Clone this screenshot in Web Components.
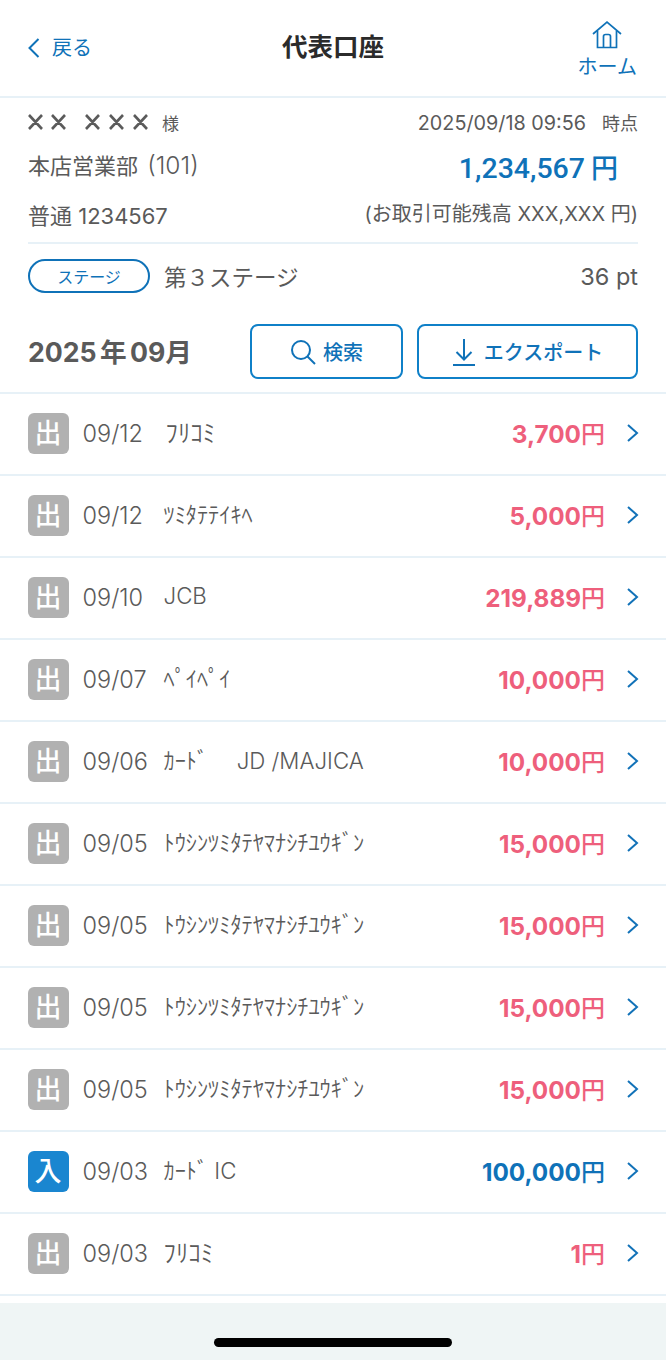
<!DOCTYPE html>
<html lang="ja"><head><meta charset="utf-8">
<style>
html,body{margin:0;padding:0;background:#fff}
body{width:666px;height:1360px;overflow:hidden;font-family:Inter,"Noto Sans CJK JP",sans-serif;color:#5a5a5a;display:flex;flex-direction:column}
</style></head><body>
<app-header></app-header>
<account-info></account-info>
<month-bar></month-bar>
<tx-list>
<tx-row date="09/12" name="ﾌﾘｺﾐ" amount="3,700" tall="first"></tx-row>
<tx-row date="09/12" name="ﾂﾐﾀﾃﾃｲｷﾍ" amount="5,000"></tx-row>
<tx-row date="09/10" name="JCB" amount="219,889"></tx-row>
<tx-row date="09/07" name="ﾍﾟｲﾍﾟｲ" amount="10,000"></tx-row>
<tx-row date="09/06" name="ｶｰﾄﾞ　 JD /MAJICA" amount="10,000"></tx-row>
<tx-row date="09/05" name="ﾄｳｼﾝﾂﾐﾀﾃﾔﾏﾅｼﾁﾕｳｷﾞﾝ" amount="15,000"></tx-row>
<tx-row date="09/05" name="ﾄｳｼﾝﾂﾐﾀﾃﾔﾏﾅｼﾁﾕｳｷﾞﾝ" amount="15,000"></tx-row>
<tx-row date="09/05" name="ﾄｳｼﾝﾂﾐﾀﾃﾔﾏﾅｼﾁﾕｳｷﾞﾝ" amount="15,000"></tx-row>
<tx-row date="09/05" name="ﾄｳｼﾝﾂﾐﾀﾃﾔﾏﾅｼﾁﾕｳｷﾞﾝ" amount="15,000"></tx-row>
<tx-row date="09/03" name="ｶｰﾄﾞ IC" amount="100,000" kind="in"></tx-row>
<tx-row date="09/03" name="ﾌﾘｺﾐ" amount="1" tall="last"></tx-row>
</tx-list>
<home-bar></home-bar>
<script>
const def=(name,html,init)=>customElements.define(name,class extends HTMLElement{
  constructor(){super();this.attachShadow({mode:'open'}).innerHTML=html;}
  connectedCallback(){if(init)init(this,this.shadowRoot);}
});
def('app-header',`<style>
:host{display:flex;align-items:flex-start;height:96px;border-bottom:2px solid #e7f1f7;position:relative;flex:none;color:#0f72b8}
.back{display:flex;align-items:center;gap:11px;margin:36px 0 0 27px;font-size:20px;line-height:24px}
h1{position:absolute;left:0;right:0;top:30px;margin:0;text-align:center;font-size:25.500px;line-height:34px;font-weight:700;color:#2b2b2b}
.home{margin:21px 29px 0 auto;display:flex;flex-direction:column;align-items:center;font-size:20px;line-height:24px}
svg{display:block}
.home span{margin-top:6px}
</style>
<div class="back"><svg width="14" height="22" viewBox="0 0 14 22" fill="none" stroke="#0f72b8" stroke-width="2"><path d="M11.500 2 2.500 11l9 9"/></svg><span>戻る</span></div>
<h1>代表口座</h1>
<div class="home"><svg width="30" height="28" viewBox="0 0 30 28" fill="none" stroke="#0f72b8" stroke-width="1.700"><path d="M1 13 15 1.200 29 13"/><path d="M5.500 10V26.500H24.500V10"/><path d="M11.500 26V15.500a2 2 0 0 1 2-2h3a2 2 0 0 1 2 2V26"/></svg><span>ホーム</span></div>`);
def('account-info',`<style>
:host{display:block;padding:0 28px;flex:none}
.r{display:flex;justify-content:space-between;align-items:center}
.r1{height:48px}
.name{display:flex;align-items:center;gap:12px}
.name small{font-size:17px}
.stamp{display:flex;align-items:baseline;font-size:19.800px;gap:16px}
.stamp span{font-size:18px}
.r2{height:42px;font-size:22px}
.branch{margin-bottom:7px}
.branch span{font-size:24.500px;font-weight:350;margin-left:3px}
.bal{font-family:Roboto,"Noto Sans CJK JP",sans-serif;font-size:28.500px;font-weight:500;color:#0f72b8;margin-right:20px;display:flex;align-items:baseline;margin-bottom:2px}
.bal span{font-size:27px;font-family:"Noto Sans CJK JP",sans-serif;font-weight:500;margin-left:6px}
.r3{height:56px;font-size:22px;box-sizing:border-box;padding-bottom:2px;border-bottom:2px solid #e7f1f7}
.avail{font-size:20px;margin-top:-3px}
.r4{height:66px;padding-bottom:2px;box-sizing:border-box}
.stage{display:flex;align-items:center;gap:14px;font-size:22.500px}
.pill{width:118px;height:30px;border:2px solid #0f72b8;border-radius:17px;display:flex;align-items:center;justify-content:center;font-size:16px;color:#0f72b8}
.pt{font-size:23.500px}
</style>
<div class="r r1"><div class="name"><svg width="122" height="16" viewBox="0 0 122 16" stroke="#5b5b5b" stroke-width="2.600" fill="none"><path d="M1 1 14 15M14 1 1 15M24 1 37 15M37 1 24 15M58 1 71 15M71 1 58 15M82 1 95 15M95 1 82 15M106 1 119 15M119 1 106 15"/></svg><small>様</small></div><div class="stamp">2025/09/18 09:56<span>時点</span></div></div>
<div class="r r2"><div class="branch">本店営業部 <span>(101)</span></div><div class="bal">1,234,567<span>円</span></div></div>
<div class="r r3"><div>普通 1234567</div><div class="avail">(お取引可能残高 XXX,XXX 円)</div></div>
<div class="r r4"><div class="stage"><div class="pill">ステージ</div><div>第３ステージ</div></div><div class="pt">36 pt</div></div>`);
def('month-bar',`<style>
:host{display:flex;align-items:center;padding:0 28px;height:84px;box-sizing:border-box;border-bottom:2px solid #e7f1f7;flex:none}
.m{font-size:26.700px;font-weight:700;color:#5a5a5a;margin-right:auto;word-spacing:-3px;margin-bottom:2px}
.b{height:55px;box-sizing:border-box;border:2px solid #0f80c8;border-radius:8px;display:flex;align-items:center;justify-content:center;color:#0f72b8;font-size:20px;font-weight:500;gap:7px;margin-top:1px}
.s{width:153px}.e{width:221px;margin-left:14px;gap:8px}
svg{display:block}
</style>
<div class="m">2025 年 09月</div>
<div class="b s"><svg width="26" height="26" viewBox="0 0 26 26" fill="none" stroke="#0f72b8" stroke-width="2"><circle cx="11" cy="11" r="9"/><path d="M17.500 17.500 25 25"/></svg>検索</div>
<div class="b e"><svg width="24" height="28" viewBox="0 0 24 28" fill="none" stroke="#0f72b8" stroke-width="2"><path d="M12 1V21M4.500 14 12 21.500 19.500 14"/><path d="M1 27H23"/></svg>エクスポート</div>`);
def('tx-list',`<style>:host{display:block;flex:none}</style><slot></slot>`);
def('tx-row',`<style>
:host{display:flex;align-items:center;height:82px;box-sizing:border-box;padding:0 28px 1px 27.500px;border-bottom:2px solid #e7f1f7}
.ic{width:41px;height:41px;border-radius:6px;background:#b1b1b1;color:#fff;font-size:27px;font-weight:500;display:flex;align-items:center;justify-content:center;margin-right:14px;flex:none;line-height:1}
:host([kind=in]) .ic{background:#1a86d0}
.d{font-size:23.500px;font-weight:350;width:81px;flex:none;margin-bottom:1px}
.n{font-size:22.300px;font-weight:350;white-space:pre;flex:1;margin-bottom:5px}
:host([tall]) .n{font-size:24.800px;margin-bottom:6px}
:host([tall=first]) .n{padding-left:2px}
.a{font-size:24.300px;font-weight:700;color:#ee5f7c;margin-bottom:3px}
.a small{font-size:24px;font-weight:500}
:host([kind=in]) .a{color:#0f72b8}
svg{display:block;margin:0 -1px 1px 21px}
</style>
<div class="ic"></div><div class="d"></div><div class="n"></div><div class="a"><span></span><small>円</small></div>
<svg width="13" height="20" viewBox="0 0 13 20" fill="none" stroke="#1272b8" stroke-width="2"><path d="M2 2l9 8-9 8"/></svg>`,(h,s)=>{
 s.querySelector('.ic').textContent=h.getAttribute('kind')==='in'?'入':'出';
 s.querySelector('.d').textContent=h.getAttribute('date');
 s.querySelector('.n').textContent=h.getAttribute('name');
 s.querySelector('.a span').textContent=h.getAttribute('amount');
});
def('home-bar',`<style>
:host{display:flex;justify-content:center;margin-top:7px;flex:1;background:#eff5f5;padding-top:35px;box-sizing:border-box}
i{display:block;width:238px;height:9px;border-radius:5px;background:#000}
</style><i></i>`);
</script>
</body></html>
